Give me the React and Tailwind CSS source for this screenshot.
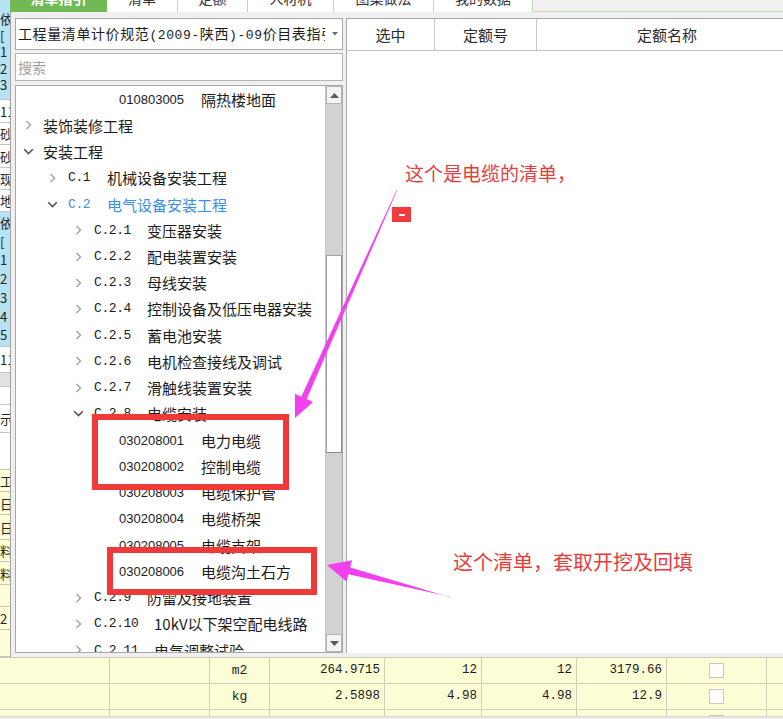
import React from 'react';

const CJK = "font-['Noto_Sans_CJK_SC',sans-serif]";
const MONO = "font-['Liberation_Mono',monospace]";
const SANS = "font-['Liberation_Sans',sans-serif]";

function Chevron({ open }) {
  if (open) {
    return (
      <svg width="11" height="7" viewBox="0 0 11 7">
        <polyline points="1.2,1.2 5.5,5.5 9.8,1.2" fill="none" stroke="#555555" strokeWidth="1.6" />
      </svg>
    );
  }
  return (
    <svg width="7" height="10" viewBox="0 0 7 10">
      <polyline points="1.5,1 5.5,5 1.5,9" fill="none" stroke="#a4a4a4" strokeWidth="1.5" />
    </svg>
  );
}

const rows = [
  { t: 'leaf', code: '010803005', name: '隔热楼地面' },
  { t: 'n1', open: false, name: '装饰装修工程' },
  { t: 'n1', open: true, name: '安装工程' },
  { t: 'n2', open: false, code: 'C.1', name: '机械设备安装工程' },
  { t: 'n2', open: true, code: 'C.2', name: '电气设备安装工程', blue: true },
  { t: 'n3', code: 'C.2.1', name: '变压器安装' },
  { t: 'n3', code: 'C.2.2', name: '配电装置安装' },
  { t: 'n3', code: 'C.2.3', name: '母线安装' },
  { t: 'n3', code: 'C.2.4', name: '控制设备及低压电器安装' },
  { t: 'n3', code: 'C.2.5', name: '蓄电池安装' },
  { t: 'n3', code: 'C.2.6', name: '电机检查接线及调试' },
  { t: 'n3', code: 'C.2.7', name: '滑触线装置安装' },
  { t: 'n3', open: true, code: 'C.2.8', name: '电缆安装' },
  { t: 'leaf', code: '030208001', name: '电力电缆' },
  { t: 'leaf', code: '030208002', name: '控制电缆' },
  { t: 'leaf', code: '030208003', name: '电缆保护管' },
  { t: 'leaf', code: '030208004', name: '电缆桥架' },
  { t: 'leaf', code: '030208005', name: '电缆支架' },
  { t: 'leaf', code: '030208006', name: '电缆沟土石方' },
  { t: 'n3', code: 'C.2.9', name: '防雷及接地装置' },
  { t: 'n3', code: 'C.2.10', name: '10kV以下架空配电线路', wide: true },
  { t: 'n3', code: 'C.2.11', name: '电气调整试验', wide: true },
];

function TreeRow({ r }) {
  const color = r.blue ? 'text-[#3b8ee8]' : 'text-[#1c1c1c]';
  if (r.t === 'leaf') {
    return (
      <div className={`flex items-center h-[26.24px] pl-[103px] whitespace-nowrap ${color}`}>
        <span className={`w-[82px] text-[13px] leading-none ${SANS}`}>{r.code}</span>
        <span className={`text-[15px] leading-none ${CJK}`}>{r.name}</span>
      </div>
    );
  }
  if (r.t === 'n1') {
    return (
      <div className={`flex items-center h-[26.24px] pl-[7px] whitespace-nowrap ${color}`}>
        <span className="w-[20px] flex">
          <span className="w-[11px] flex justify-center items-center"><Chevron open={r.open} /></span>
        </span>
        <span className={`text-[15px] leading-none ${CJK}`}>{r.name}</span>
      </div>
    );
  }
  if (r.t === 'n2') {
    return (
      <div className={`flex items-center h-[26.24px] pl-[31px] whitespace-nowrap ${color}`}>
        <span className="w-[21px] flex">
          <span className="w-[11px] flex justify-center items-center"><Chevron open={r.open} /></span>
        </span>
        <span className={`w-[39px] text-[13px] tracking-[-0.4px] leading-none ${MONO}`}>{r.code}</span>
        <span className={`text-[15px] leading-none ${CJK}`}>{r.name}</span>
      </div>
    );
  }
  return (
    <div className={`flex items-center h-[26.24px] pl-[57px] whitespace-nowrap ${color}`}>
      <span className="w-[21px] flex">
        <span className="w-[11px] flex justify-center items-center"><Chevron open={r.open} /></span>
      </span>
      <span className={`${r.wide ? 'w-[60px]' : 'w-[53px]'} text-[13px] tracking-[-0.4px] leading-none ${MONO}`}>{r.code}</span>
      <span className={`text-[15px] leading-none ${CJK}`}>{r.name}</span>
    </div>
  );
}

function Scrollbar() {
  return (
    <div className="w-[17px] flex flex-col bg-[#d2d2d2] border-l border-[#c4c4c4]">
      <div className="h-[18px] bg-[#f4f4f4] border border-[#b4b4b4] flex items-center justify-center">
        <svg width="9" height="5" viewBox="0 0 9 5"><polygon points="0,5 4.5,0 9,5" fill="#5a5a5a" /></svg>
      </div>
      <div className="flex-1 flex flex-col">
        <div className="h-[151px]" />
        <div className="h-[198px] bg-white border border-[#a2a2a2] border-r-[#8c8c8c] border-b-[#8c8c8c]" />
      </div>
      <div className="h-[18px] bg-[#f4f4f4] border border-[#b4b4b4] flex items-center justify-center">
        <svg width="9" height="5" viewBox="0 0 9 5"><polygon points="0,0 4.5,5 9,0" fill="#5a5a5a" /></svg>
      </div>
    </div>
  );
}

const strip = [
  { h: 100, bg: 'bg-[#b6e3f4]', lines: ['依', '[', '1', '2', '3'], pt: 'pt-[11px]', lead: 'leading-[16.5px]' },
  { h: 23, bg: 'bg-white', lines: ['11'] },
  { h: 22, bg: 'bg-white', lines: ['砂'] },
  { h: 23, bg: 'bg-white', lines: ['砂'] },
  { h: 22, bg: 'bg-white', lines: ['现'] },
  { h: 22, bg: 'bg-white', lines: ['地'] },
  { h: 135, bg: 'bg-[#b6e3f4]', lines: ['依', '[', '1', '2', '3', '4', '5'], pt: 'pt-[2px]', lead: 'leading-[18.7px]' },
  { h: 26, bg: 'bg-white', lines: ['11'] },
  { h: 14, bg: 'bg-[#e2e2e2]', lines: [] },
  { h: 18, bg: 'bg-white', lines: [] },
  { h: 28, bg: 'bg-white', lines: ['示'] },
  { h: 37, bg: 'bg-white', lines: [] },
  { h: 22, bg: 'bg-[#fdfdd6]', lines: ['工'] },
  { h: 23, bg: 'bg-[#fdfdd6]', lines: ['日'] },
  { h: 25, bg: 'bg-[#fdfdd6]', lines: ['日'] },
  { h: 22, bg: 'bg-[#fdfdd6]', lines: ['料'] },
  { h: 23, bg: 'bg-[#fdfdd6]', lines: ['料'] },
  { h: 22, bg: 'bg-[#fdfdd6]', lines: [] },
  { h: 23, bg: 'bg-[#fdfdd6]', lines: ['2'] },
  { h: 27, bg: 'bg-[#fdfdd6]', lines: [] },
];

function Strip() {
  return (
    <div className="w-[10px] shrink-0 overflow-hidden flex flex-col">
      {strip.map((c, i) => (
        <div
          key={i}
          style={{ height: c.h }}
          className={`${c.bg} border-b border-[#c6c6c6] whitespace-nowrap text-[13px] text-[#222] overflow-hidden ${CJK} ${c.lines.length > 1 ? `${c.pt} ${c.lead} flex flex-col` : 'flex items-center leading-none'}`}
        >
          {c.lines.map((l, j) => (
            <span key={j} className="block">{l}</span>
          ))}
        </div>
      ))}
    </div>
  );
}

const tabs = [
  { w: 'w-[97px]', label: '清单指引', green: true },
  { w: 'w-[71px]', label: '清单' },
  { w: 'w-[70px]', label: '定额' },
  { w: 'w-[86px]', label: '人材机' },
  { w: 'w-[100px]', label: '图集做法' },
  { w: 'w-[99px]', label: '我的数据' },
];

function Tabs() {
  return (
    <div className="h-[12px] flex border-b border-[#b9dca9] bg-[#f0f0f0]">
      {tabs.map((t, i) => (
        <div
          key={i}
          className={`${t.w} h-[12px] overflow-hidden flex items-end justify-center ${t.green ? 'bg-[#70b955] text-white font-bold' : 'bg-white text-[#333] border-r border-[#b9dca9]'}`}
        >
          <span className={`text-[14px] leading-[14px] mb-[7px] whitespace-nowrap ${CJK}`}>{t.label}</span>
        </div>
      ))}
    </div>
  );
}

function Dialog() {
  return (
    <div className="flex-1 flex border-l border-[#a4a4a4] bg-[#f0f0f0] pt-[6px] pl-[4px] pb-[4px] min-h-0">
      <div className="w-[328px] shrink-0 flex flex-col">
        <div className="h-[32px] bg-white border border-[#a9a9a9] flex items-center pl-[2px]">
          <div className={`w-[307px] overflow-hidden whitespace-nowrap text-[14px] tracking-[0.6px] leading-none text-[#1c1c1c] ${CJK}`}>
            工程量清单计价规范<span className={`text-[13px] ${MONO}`}>(2009-</span>陕西<span className={`text-[13px] ${MONO}`}>)-09</span>价目表指引
          </div>
          <svg className="ml-[7px]" width="6" height="4" viewBox="0 0 6 4"><polygon points="0,0 3,3.5 6,0" fill="#6a6a6a" /></svg>
        </div>
        <div className="h-[28px] mt-[3px] bg-white border border-[#b4b4b4] flex items-center pl-[2px]">
          <span className={`text-[14px] leading-none text-[#a0a0a0] ${CJK}`}>搜索</span>
        </div>
        <div className="flex-1 mt-[4px] bg-white border border-[#a8a8a8] flex min-h-0 overflow-hidden">
          <div className="flex-1 overflow-hidden">
            {rows.map((r, i) => (
              <TreeRow key={i} r={r} />
            ))}
          </div>
          <Scrollbar />
        </div>
      </div>
      <div className="ml-[3px] flex-1 min-w-0 overflow-hidden bg-white border-l border-t border-[#a8a8a8]">
        <div className={`h-[32px] flex border-b border-[#bdbdbd] text-[15px] leading-none text-[#2a2a2a] ${CJK}`}>
          <div className="w-[88px] shrink-0 flex items-center justify-center border-r border-[#c8c8c8]">选中</div>
          <div className="w-[102px] shrink-0 flex items-center justify-center border-r border-[#c8c8c8]">定额号</div>
          <div className="w-[260px] shrink-0 flex items-center justify-center">定额名称</div>
        </div>
      </div>
    </div>
  );
}

const colW = ['w-[110px]', 'w-[100px]', 'w-[60px]', 'w-[115px]', 'w-[97px]', 'w-[95px]', 'w-[90px]', 'w-[100px]', 'w-[60px]'];

const tableRows = [
  ['', '', 'm2', '264.9715', '12', '12', '3179.66', 'cb', ''],
  ['', '', 'kg', '2.5898', '4.98', '4.98', '12.9', 'cb', ''],
  ['钢筋网片(标准)', '', 'm', '333.51', '11.37', '8.8', '4331.48', 'cb', ''],
];

function Table() {
  return (
    <div className="relative h-[62px] overflow-hidden bg-[#fdfdd6] border-t border-[#c8c8b8]">
      {tableRows.map((row, i) => (
        <div key={i} className="flex h-[26px] border-b border-[#cfcfc0]">
          {row.map((c, j) => (
            <div
              key={j}
              className={`${colW[j]} shrink-0 h-full flex items-center border-r border-[#cfcfc0] text-[#1c1c1c] whitespace-nowrap overflow-hidden ${j >= 3 && j <= 6 ? 'justify-end pr-[4px]' : j === 2 || j === 7 ? 'justify-center' : 'justify-start'}`}
            >
              {c === 'cb' ? (
                <span className="w-[15px] h-[15px] bg-white border border-[#c8c8c8]" />
              ) : j === 0 ? (
                <span className={`text-[14px] leading-none ml-[-6px] ${CJK}`}>{c}</span>
              ) : j === 2 ? (
                <span className={`text-[13px] leading-none ${MONO}`}>{c}</span>
              ) : (
                <span className={`text-[12.5px] leading-none ${MONO}`}>{c}</span>
              )}
            </div>
          ))}
        </div>
      ))}
      <div className="absolute left-0 right-0 bottom-0 h-[3px] bg-[#ececec] border-t border-[#d4d4d4]" />
    </div>
  );
}

function Annotations() {
  return (
    <div className="absolute inset-0 pointer-events-none">
      <svg className="absolute inset-0" width="783" height="719" viewBox="0 0 783 719">
        <polygon
          points="397.3,190.1 306.7,399.1 313.1,402 295,418 294.9,393.8 301.3,396.7 396.7,189.9"
          fill="#f040f0"
        />
        <polygon
          points="450,597.3 350.2,567.4 352.1,560.2 327,565 346.5,581.4 348.4,574.2 450,596.7"
          fill="#f040f0"
        />
      </svg>
      <div className="absolute left-[92px] top-[414px] w-[197px] h-[76px] border-[6px] border-[#f03a3a]" />
      <div className="absolute left-[107px] top-[547px] w-[210px] h-[48px] border-[6px] border-[#f03a3a]" />
      <div className={`absolute left-[405px] top-[163px] text-[19px] leading-[19px] text-[#e63c3c] whitespace-nowrap ${CJK}`}>
        这个是电缆的清单，
      </div>
      <div className={`absolute left-[453px] top-[552px] text-[20px] leading-[20px] text-[#e63c3c] whitespace-nowrap ${CJK}`}>
        这个清单，套取开挖及回填
      </div>
      <div className="absolute left-[392px] top-[207px] w-[19px] h-[15px] bg-[#f03c3c] flex items-center justify-center">
        <span className="w-[6px] h-[2px] bg-white" />
      </div>
    </div>
  );
}

export default function App() {
  return (
    <div className="relative w-[783px] h-[719px] overflow-hidden bg-[#f0f0f0]">
      <div className="flex h-[657px]">
        <Strip />
        <div className="flex-1 min-w-0 flex flex-col">
          <Tabs />
          <Dialog />
        </div>
      </div>
      <Table />
      <Annotations />
    </div>
  );
}
